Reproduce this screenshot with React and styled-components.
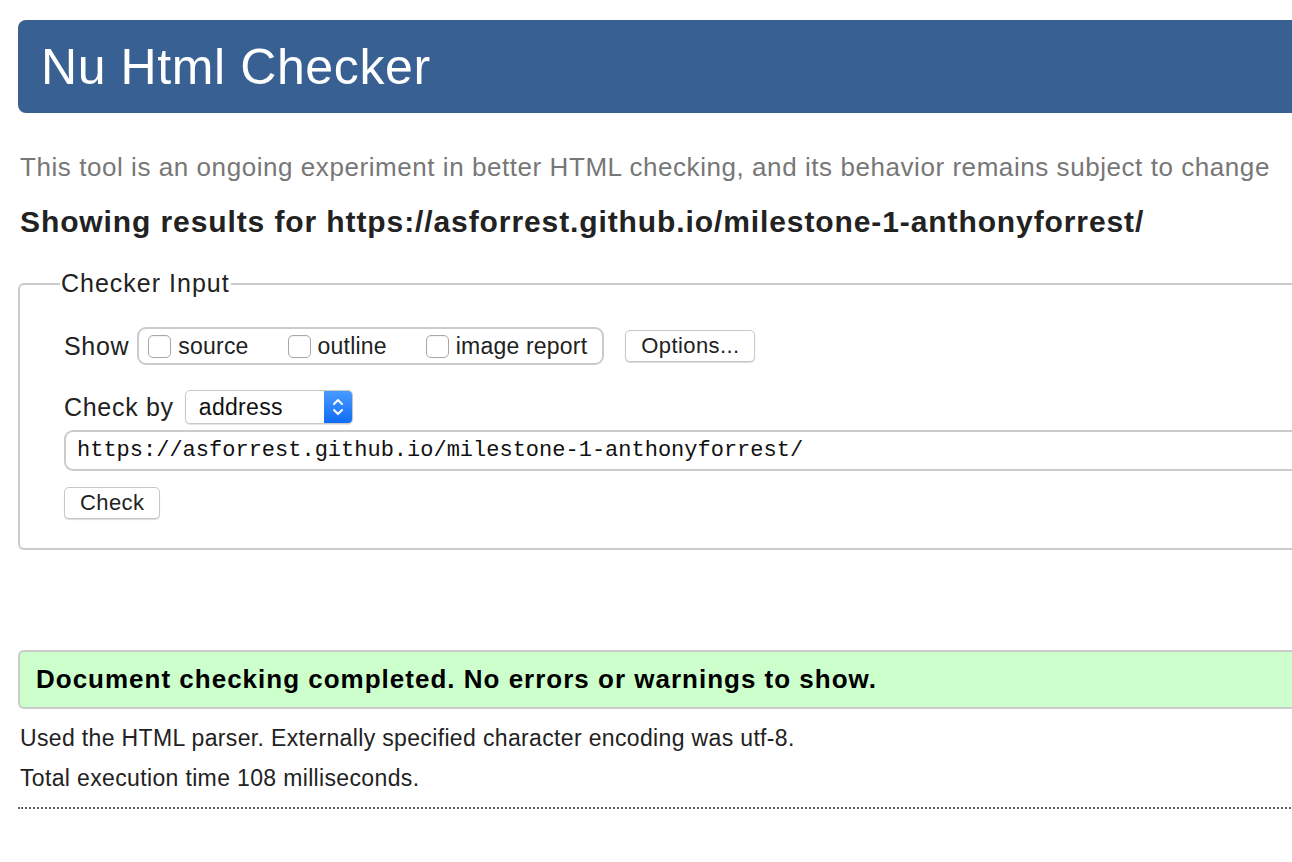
import styled, { createGlobalStyle } from "styled-components";

const GlobalStyle = createGlobalStyle`
  html, body {
    margin: 0;
    padding: 0;
    background: #fff;
    overflow: hidden;
  }
  body {
    font-family: "Liberation Sans", Arial, sans-serif;
    color: #222;
  }
`;

const Page = styled.div`
  width: 1400px;
  padding: 20px 0 40px 18px;
`;

const Header = styled.h1`
  margin: 0;
  height: 93px;
  display: flex;
  align-items: center;
  padding-left: 23px;
  background: #386092;
  border-radius: 8px 0 0 8px;
  color: #fff;
  font-weight: normal;
  font-size: 50px;
  letter-spacing: 0.6px;
`;

const Intro = styled.p`
  margin: 39px 0 0 2px;
  font-size: 26px;
  line-height: 30px;
  letter-spacing: 0.56px;
  color: #777;
`;

const Results = styled.h2`
  margin: 23px 0 0 2px;
  font-size: 30px;
  line-height: 34px;
  letter-spacing: 0.9px;
  font-weight: bold;
  color: #222;
`;

const Fieldset = styled.fieldset`
  margin: 30px 0 0 0;
  padding: 12px 0 29px 44px;
  border: 2px solid #cbcbcb;
  border-right: none;
  border-radius: 6px 0 0 6px;
`;

const Legend = styled.legend`
  margin-left: -4px;
  padding: 0 1px;
  font-size: 25px;
  line-height: 29px;
  letter-spacing: 1px;
  color: #222;
`;

const Row = styled.div`
  display: flex;
  align-items: center;
  gap: ${(p) => p.$gap || 8}px;
  margin-top: ${(p) => p.$top || 0}px;
`;

const Label = styled.span`
  font-size: 25px;
  letter-spacing: 0.7px;
  color: #222;
`;

const Group = styled.div`
  display: flex;
  align-items: center;
  height: 34px;
  padding: 0 15px 0 9px;
  border: 2px solid #cbcbcb;
  border-radius: 9px;
  gap: 39px;
`;

const Choice = styled.label`
  display: flex;
  align-items: center;
  gap: 7px;
  font-size: 23px;
  letter-spacing: 0.2px;
  color: #222;
`;

const Box = styled.span`
  width: 21px;
  height: 21px;
  border: 1px solid #a8a8a8;
  border-radius: 5px;
  background: #fff;
  box-shadow: inset 0 1px 1px rgba(0, 0, 0, 0.05);
`;

const Button = styled.button`
  height: 32px;
  padding: 0 ${(p) => p.$pad || 14}px;
  margin-left: ${(p) => p.$left || 0}px;
  font-family: "Liberation Sans", Arial, sans-serif;
  font-size: 22px;
  letter-spacing: 0.4px;
  color: #222;
  background: #fff;
  border: 1px solid #c8c8c8;
  border-radius: 5px;
  box-shadow: 0 1px 1px rgba(0, 0, 0, 0.15);
`;

const Select = styled.div`
  display: flex;
  width: 168px;
  height: 34px;
  margin-left: 3px;
  border: 1px solid #c8c8c8;
  border-radius: 5px;
  box-shadow: 0 1px 1px rgba(0, 0, 0, 0.12);
  overflow: hidden;
  box-sizing: border-box;
`;

const SelectText = styled.span`
  flex: 1;
  display: flex;
  align-items: center;
  padding-left: 13px;
  font-size: 23px;
  letter-spacing: 0.3px;
  color: #111;
`;

const Stepper = styled.span`
  width: 28px;
  display: flex;
  align-items: center;
  justify-content: center;
  background: linear-gradient(#4a9bff, #0f6cf4);
`;

const UrlInput = styled.div`
  margin-top: 6px;
  height: 41px;
  display: flex;
  align-items: center;
  padding-left: 11px;
  border: 2px solid #cbcbcb;
  border-right: none;
  border-radius: 9px 0 0 9px;
  font-family: "Liberation Mono", "DejaVu Sans Mono", monospace;
  font-size: 22px;
  color: #111;
  box-sizing: border-box;
`;

const Success = styled.div`
  margin-top: 100px;
  height: 59px;
  box-sizing: border-box;
  display: flex;
  align-items: center;
  padding-left: 16px;
  background: #ccffcc;
  border: 2px solid #cbcbcb;
  border-right: none;
  border-radius: 6px 0 0 6px;
  font-size: 26px;
  letter-spacing: 1px;
  font-weight: bold;
  color: #000;
`;

const Note = styled.p`
  margin: ${(p) => p.$top}px 0 0 2px;
  font-size: 23px;
  line-height: 26px;
  letter-spacing: 0.35px;
  color: #222;
`;

const Divider = styled.hr`
  margin: 16px 0 0 0;
  border: none;
  border-top: 2px dotted #666;
`;

const Arrows = () => (
  <svg width="14" height="22" viewBox="0 0 14 22" fill="none">
    <path d="M3 8 L7 4 L11 8" stroke="#fff" strokeWidth="2" strokeLinecap="round" strokeLinejoin="round" />
    <path d="M3 14 L7 18 L11 14" stroke="#fff" strokeWidth="2" strokeLinecap="round" strokeLinejoin="round" />
  </svg>
);

const App = () => {
  return (
    <Page>
      <GlobalStyle />
      <Header>Nu Html Checker</Header>
      <Intro>
        This tool is an ongoing experiment in better HTML checking, and its behavior remains subject to change
      </Intro>
      <Results>Showing results for https://asforrest.github.io/milestone-1-anthonyforrest/</Results>
      <Fieldset>
        <Legend>Checker Input</Legend>
        <Row $gap={8} $top={17}>
          <Label>Show</Label>
          <Group>
            <Choice>
              <Box />
              source
            </Choice>
            <Choice>
              <Box />
              outline
            </Choice>
            <Choice>
              <Box />
              image report
            </Choice>
          </Group>
          <Button $left={13} $pad={15}>Options...</Button>
        </Row>
        <Row $gap={8} $top={25}>
          <Label>Check by</Label>
          <Select>
            <SelectText>address</SelectText>
            <Stepper>
              <Arrows />
            </Stepper>
          </Select>
        </Row>
        <UrlInput>https://asforrest.github.io/milestone-1-anthonyforrest/</UrlInput>
        <Row $top={16}>
          <Button $pad={15}>Check</Button>
        </Row>
      </Fieldset>
      <Success>Document checking completed. No errors or warnings to show.</Success>
      <Note $top={16}>Used the HTML parser. Externally specified character encoding was utf-8.</Note>
      <Note $top={14}>Total execution time 108 milliseconds.</Note>
      <Divider />
    </Page>
  );
};

export default App;
